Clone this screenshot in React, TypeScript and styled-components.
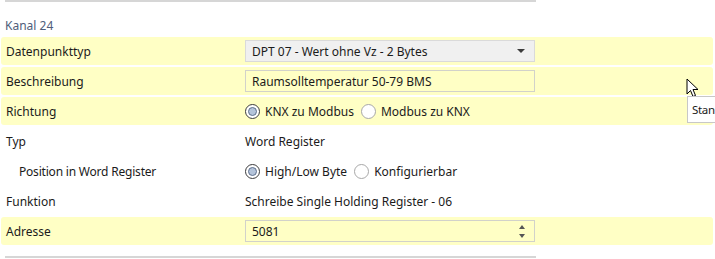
import React from 'react';
import styled, { createGlobalStyle } from 'styled-components';

const GlobalStyle = createGlobalStyle`
  body {
    margin: 0;
    background: #ffffff;
    font-family: "Segoe UI", "Noto Sans", "Open Sans", sans-serif;
    font-size: 12px;
    color: #1b1b1b;
  }
`;

const Page = styled.div`
  position: relative;
  width: 715px;
  height: 259px;
  overflow: hidden;
`;

const Separator = styled.div`
  height: 2px;
  width: 531px;
  margin-left: 5px;
  background: #d6d6d6;
`;

const Header = styled.div`
  height: 35px;
  box-sizing: border-box;
  padding: 15px 0 0 5px;
  color: #4f5e7b;
`;

const Rows = styled.div`
  display: flex;
  flex-direction: column;
  gap: 2px;
  margin-bottom: 11px;
`;

const Row = styled.div<{ $highlight?: boolean }>`
  display: grid;
  grid-template-columns: 239px 290px;
  align-items: center;
  height: 28px;
  width: 707px;
  margin-left: 1px;
  padding-left: 5px;
  border-radius: 3px;
  background: ${({ $highlight }) => ($highlight ? '#ffffc5' : 'transparent')};
`;

const Label = styled.div<{ $indent?: boolean }>`
  padding-left: ${({ $indent }) => ($indent ? '13px' : '0')};
  white-space: nowrap;
  letter-spacing: ${({ $indent }) => ($indent ? '-0.2px' : '0')};
`;

const Field = styled.div<{ $variant: 'combo' | 'text' }>`
  display: flex;
  align-items: center;
  justify-content: space-between;
  box-sizing: border-box;
  height: 22px;
  padding: 0 5px 0 6px;
  border: 1px solid ${({ $variant }) => ($variant === 'combo' ? '#dadada' : '#d2d2ca')};
  background: ${({ $variant }) => ($variant === 'combo' ? '#f0f0f0' : '#ffffc5')};
  white-space: nowrap;
`;

const ArrowDown = styled.span`
  width: 0;
  height: 0;
  margin-right: 4px;
  border-left: 4px solid transparent;
  border-right: 4px solid transparent;
  border-top: 4px solid #3c3c3c;
`;

const Spinner = styled.span`
  display: flex;
  flex-direction: column;
  gap: 5px;
  margin-right: 4px;
`;

const SpinArrow = styled.span<{ $up?: boolean }>`
  width: 0;
  height: 0;
  border-left: 3px solid transparent;
  border-right: 3px solid transparent;
  ${({ $up }) => ($up ? 'border-bottom: 4px solid #555;' : 'border-top: 4px solid #555;')}
`;

const RadioGroup = styled.div`
  display: flex;
  align-items: center;
  gap: 7px;
`;

const RadioOption = styled.label`
  display: flex;
  align-items: center;
  gap: 5px;
  white-space: nowrap;
`;

const RadioCircle = styled.span<{ $checked?: boolean }>`
  display: flex;
  align-items: center;
  justify-content: center;
  box-sizing: border-box;
  width: 15px;
  height: 15px;
  border-radius: 50%;
  border: 1px solid ${({ $checked }) => ($checked ? '#3b3b3b' : '#a8a8a8')};
  background: #ffffff;

  &::after {
    content: '';
    display: ${({ $checked }) => ($checked ? 'block' : 'none')};
    width: 9px;
    height: 9px;
    box-sizing: border-box;
    border-radius: 50%;
    border: 1px solid #5d6f8c;
    background: #b4c4da;
  }
`;

const Tooltip = styled.div`
  position: absolute;
  left: 687px;
  top: 96px;
  width: 40px;
  height: 27px;
  box-sizing: border-box;
  padding: 5px 0 0 4px;
  border: 1px solid #c8c8c8;
  background: #ffffff;
  color: #1a1a1a;
  font-size: 11.5px;
  letter-spacing: -0.3px;
  white-space: nowrap;
`;

const Cursor = styled.svg`
  position: absolute;
  left: 686px;
  top: 78px;
`;

function Radio({ checked, label }: { checked?: boolean; label: string }) {
  return (
    <RadioOption>
      <RadioCircle $checked={checked} />
      {label}
    </RadioOption>
  );
}

export default function App() {
  return (
    <Page>
      <GlobalStyle />
      <Separator />
      <Header>Kanal 24</Header>
      <Rows>
        <Row $highlight>
          <Label>Datenpunkttyp</Label>
          <Field $variant="combo">
            DPT 07 - Wert ohne Vz - 2 Bytes
            <ArrowDown />
          </Field>
        </Row>
        <Row $highlight>
          <Label>Beschreibung</Label>
          <Field $variant="text">Raumsolltemperatur 50-79 BMS</Field>
        </Row>
        <Row $highlight>
          <Label>Richtung</Label>
          <RadioGroup>
            <Radio checked label="KNX zu Modbus" />
            <Radio label="Modbus zu KNX" />
          </RadioGroup>
        </Row>
        <Row>
          <Label>Typ</Label>
          <div>Word Register</div>
        </Row>
        <Row>
          <Label $indent>Position in Word Register</Label>
          <RadioGroup>
            <Radio checked label="High/Low Byte" />
            <Radio label="Konfigurierbar" />
          </RadioGroup>
        </Row>
        <Row>
          <Label>Funktion</Label>
          <div>Schreibe Single Holding Register - 06</div>
        </Row>
        <Row $highlight>
          <Label>Adresse</Label>
          <Field $variant="text">
            5081
            <Spinner>
              <SpinArrow $up />
              <SpinArrow />
            </Spinner>
          </Field>
        </Row>
      </Rows>
      <Separator />
      <Cursor width="14" height="20" viewBox="0 0 14 20">
        <path d="M1 1 L1 16 L4.5 12.5 L7 18.5 L9.5 17.5 L7 11.5 L12 11.5 Z" fill="#ffffff" stroke="#000000" strokeWidth="1" />
      </Cursor>
      <Tooltip>Stan</Tooltip>
    </Page>
  );
}
